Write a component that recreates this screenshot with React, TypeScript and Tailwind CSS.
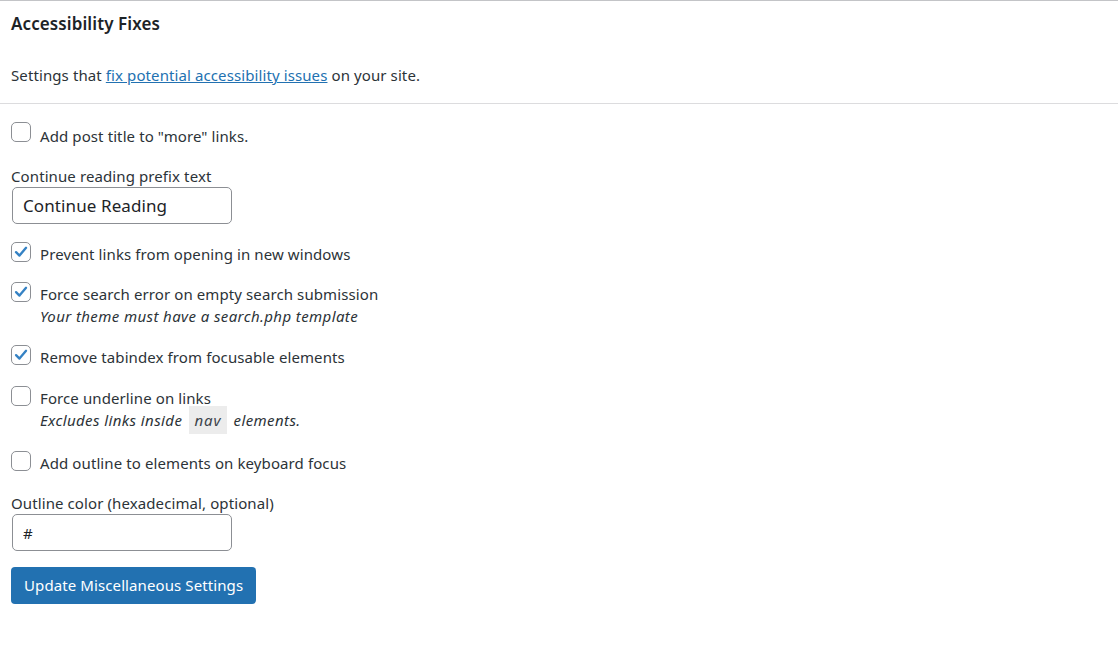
import { useState } from "react";

type Opt = {
  id: string;
  label: string;
  checked: boolean;
  note?: React.ReactNode;
  noteClass?: string;
  rowClass?: string;
};

const OPTIONS_A: Opt[] = [
  { id: "prevent", label: "Prevent links from opening in new windows", checked: true },
  {
    id: "search",
    label: "Force search error on empty search submission",
    checked: true,
    note: "Your theme must have a search.php template",
  },
  { id: "tabindex", label: "Remove tabindex from focusable elements", checked: true },
  {
    id: "underline",
    label: "Force underline on links",
    checked: false,
    rowClass: "mt-[1px]",
    noteClass: "pb-[2px]",
    note: (
      <>
        Excludes links inside{" "}
        <code className="mx-[2px] bg-[#ececec] px-[6px] py-[4px] font-['Noto_Sans',sans-serif] text-[15px] italic tracking-[0.8px] text-[#3c434a]">
          nav
        </code>{" "}
        elements.
      </>
    ),
  },
  { id: "outline", label: "Add outline to elements on keyboard focus", checked: false },
];

function Check({ checked, onChange }: { checked: boolean; onChange: () => void }) {
  return (
    <button
      type="button"
      onClick={onChange}
      className="flex h-[20px] w-[20px] shrink-0 items-center justify-center rounded-[5px] border border-[#8c8f94] bg-white"
    >
      {checked && (
        <svg viewBox="0 0 20 20" className="h-[22px] w-[22px]">
          <path
            d="M4.5 10.2 L8.3 14 L15.6 5.4"
            fill="none"
            stroke="#3582c4"
            strokeWidth="2.6"
            strokeLinecap="round"
            strokeLinejoin="round"
          />
        </svg>
      )}
    </button>
  );
}

export default function App() {
  const [moreLinks, setMoreLinks] = useState(false);
  const [opts, setOpts] = useState<Record<string, boolean>>(
    Object.fromEntries(OPTIONS_A.map((o) => [o.id, o.checked]))
  );
  const [prefix, setPrefix] = useState("Continue Reading");
  const [color, setColor] = useState("#");

  return (
    <div className="min-h-[648px] bg-white font-['Noto_Sans',sans-serif] text-[15px] tracking-[0.1px] text-[#1d2327]">
      {/* Header */}
      <div className="border-t border-[#c3c4c7] px-[11px] pt-[11px] pb-[17px]">
        <h2 className="text-[17px] font-semibold leading-[24px]">Accessibility Fixes</h2>
        <p className="mt-[28px] leading-[22px] text-[#2c3338]">
          Settings that{" "}
          <a href="#" className="text-[#2271b1] underline">
            fix potential accessibility issues
          </a>{" "}
          on your site.
        </p>
      </div>

      <div className="border-t border-[#dcdcde] px-[11px] pt-[13px]">
        <label className="flex items-center gap-[9px] leading-[22px] text-[#2c3338]">
          <Check checked={moreLinks} onChange={() => setMoreLinks(!moreLinks)} />
          <span className="mt-[8px]">Add post title to "more" links.</span>
        </label>

        <div className="mt-[18px] leading-[22px] text-[#2c3338]">Continue reading prefix text</div>
        <input
          value={prefix}
          onChange={(e) => setPrefix(e.target.value)}
          className="ml-[1px] block h-[37px] w-[220px] rounded-[5px] border border-[#8c8f94] px-[10px] text-[17px] text-[#1d2327] outline-none"
        />

        <div className="mt-[18px] flex flex-col gap-[17px]">
          {OPTIONS_A.map((o) => (
            <div
              key={o.id}
              className={`flex items-start gap-[9px] text-[#2c3338] ${o.rowClass ?? ""}`}
            >
              <Check
                checked={opts[o.id]}
                onChange={() => setOpts({ ...opts, [o.id]: !opts[o.id] })}
              />
              <div className="leading-[22px]">
                <div className="mt-[1px]">{o.label}</div>
                {o.note && (
                  <div className={`italic leading-[23px] tracking-[0.4px] ${o.noteClass ?? ""}`}>
                    {o.note}
                  </div>
                )}
              </div>
            </div>
          ))}
        </div>

        <div className="mt-[18px] leading-[22px] text-[#2c3338]">Outline color (hexadecimal, optional)</div>
        <input
          value={color}
          onChange={(e) => setColor(e.target.value)}
          className="ml-[1px] block h-[37px] w-[220px] rounded-[5px] border border-[#8c8f94] px-[10px] text-[15px] text-[#1d2327] outline-none"
        />

        <button
          type="button"
          className="mt-[16px] h-[37px] rounded-[4px] bg-[#2271b1] px-[13px] text-[15px] text-white"
        >
          Update Miscellaneous Settings
        </button>
      </div>
    </div>
  );
}
